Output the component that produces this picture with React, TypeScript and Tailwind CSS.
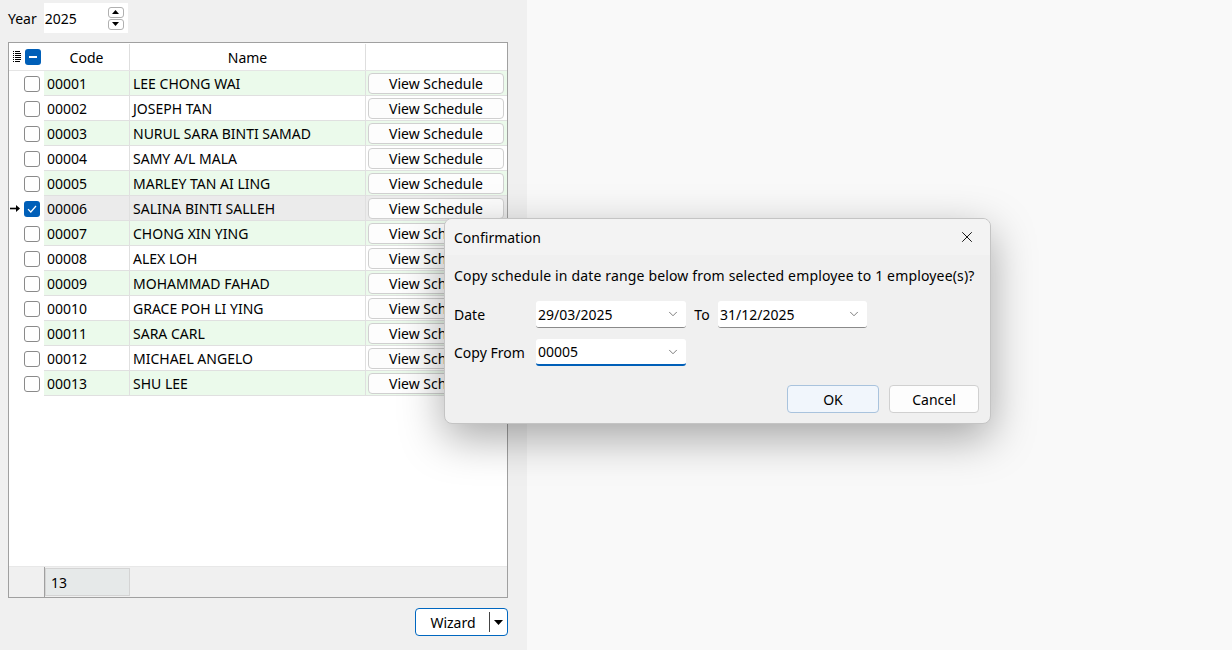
import React from 'react';
import { X, ChevronDown } from 'lucide-react';

const employees = [
  { code: '00001', name: 'LEE CHONG WAI' },
  { code: '00002', name: 'JOSEPH TAN' },
  { code: '00003', name: 'NURUL SARA BINTI SAMAD' },
  { code: '00004', name: 'SAMY A/L MALA' },
  { code: '00005', name: 'MARLEY TAN AI LING' },
  { code: '00006', name: 'SALINA BINTI SALLEH' },
  { code: '00007', name: 'CHONG XIN YING' },
  { code: '00008', name: 'ALEX LOH' },
  { code: '00009', name: 'MOHAMMAD FAHAD' },
  { code: '00010', name: 'GRACE POH LI YING' },
  { code: '00011', name: 'SARA CARL' },
  { code: '00012', name: 'MICHAEL ANGELO' },
  { code: '00013', name: 'SHU LEE' },
];

const ListIcon = () => (
  <svg width="8" height="12" viewBox="0 0 8 12" className="shrink-0">
    {[0, 2, 4, 6, 8, 10].map((y) => (
      <g key={y}>
        <rect x="0" y={y} width="1" height="1" fill="#000" />
        <rect x="2" y={y} width={y === 0 || y === 10 ? 5 : 6} height="1" fill="#000" />
      </g>
    ))}
  </svg>
);

const Check = ({ checked }: { checked?: boolean }) =>
  checked ? (
    <div className="w-4 h-4 rounded-[3px] bg-[#005fb8] flex items-center justify-center">
      <svg width="10" height="8" viewBox="0 0 10 8">
        <path d="M1 4.2 L3.8 7 L9 1" stroke="#fff" strokeWidth="1.2" fill="none" />
      </svg>
    </div>
  ) : (
    <div className="w-4 h-4 rounded-[3px] border border-[#8a8a8a] bg-white" />
  );

const Combo = ({ value, width, focused }: { value: string; width: string; focused?: boolean }) => (
  <div
    className={`${width} h-[27px] bg-white flex items-center justify-between pl-[2px] pr-[6px] rounded-[3px] ${
      focused ? 'border-b-2 border-b-[#005fb8]' : 'border-b border-b-[#8a8a8a]'
    }`}
  >
    <span className="text-[14px] text-black">{value}</span>
    <ChevronDown size={14} strokeWidth={1.3} className="text-[#555]" />
  </div>
);

export default function App() {
  return (
    <div
      className="relative w-[1232px] h-[650px] flex overflow-hidden text-black"
      style={{ fontFamily: '"Noto Sans", "Open Sans", sans-serif' }}
    >
      <div className="w-[527px] h-full bg-[#f0f0f0] flex flex-col">
        <div className="h-[38px] flex items-center pl-[8px] gap-[7px] pb-[2px]">
          <span className="text-[14px]">Year</span>
          <div className="w-[84px] h-[30px] bg-white flex items-center justify-between pl-[1px] pr-[4px]">
            <span className="text-[14px]">2025</span>
            <div className="flex flex-col gap-[1px]">
              <div className="w-[16px] h-[11px] border border-[#b0b0b0] rounded-[3px] flex items-center justify-center">
                <svg width="7" height="4" viewBox="0 0 7 4"><path d="M0 4 L3.5 0 L7 4 Z" fill="#000" /></svg>
              </div>
              <div className="w-[16px] h-[11px] border border-[#b0b0b0] rounded-[3px] flex items-center justify-center">
                <svg width="7" height="4" viewBox="0 0 7 4"><path d="M0 0 L3.5 4 L7 0 Z" fill="#000" /></svg>
              </div>
            </div>
          </div>
        </div>

        <div className="mt-[4px] ml-[8px] w-[500px] h-[556px] border border-[#a0a0a0] flex flex-col bg-white">
          {/* header */}
          <div className="h-[28px] flex text-[14px] border-b border-[#e5e5e5] pt-[1px]">
            <div className="w-[35px] flex items-center justify-end gap-[4px] pr-[3px]">
              <ListIcon />
              <div className="w-4 h-4 rounded-[3px] bg-[#005fb8] flex items-center justify-center">
                <div className="w-[8px] h-[1.5px] bg-white" />
              </div>
            </div>
            <div className="w-[86px] flex items-center justify-center border-r border-[#dedede]">Code</div>
            <div className="w-[236px] flex items-center justify-center border-r border-[#dedede]">Name</div>
            <div className="flex-1" />
          </div>

          {employees.map((e, i) => {
            const current = i === 5;
            const bg = current ? 'bg-[#ebebeb]' : i % 2 === 0 ? 'bg-[#ebfaeb]' : 'bg-white';
            return (
              <div key={e.code} className="h-[25px] flex text-[14px]">
                <div className="w-[35px] flex items-center justify-end pr-[4px] gap-[3px] bg-white">
                  {current && (
                    <svg width="11" height="9" viewBox="0 0 11 9">
                      <path d="M0 4.5 H8" stroke="#000" strokeWidth="1.6" />
                      <path d="M6 1 L10 4.5 L6 8 Z" fill="#000" />
                    </svg>
                  )}
                  <Check checked={current} />
                </div>
                <div className={`w-[86px] flex items-center pl-[3px] border-r border-b border-[#e0e0e0] ${bg}`}>{e.code}</div>
                <div className={`w-[236px] flex items-center pl-[3px] border-r border-b border-[#e0e0e0] ${bg}`}>{e.name}</div>
                <div className={`flex-1 flex items-center pl-[2px] pr-[2px] border-b border-[#e0e0e0] ${bg}`}>
                  <div className="w-[136px] h-[21px] bg-[#fdfdfd] border border-[#d0d0d0] rounded-[4px] flex items-center justify-center">
                    View Schedule
                  </div>
                </div>
              </div>
            );
          })}

          <div className="flex-1 bg-white" />

          <div className="h-[31px] bg-[#f0f0f0] flex border-t border-[#e8e8e8]">
            <div className="w-[36px] border-r border-[#a0a0a0]" />
            <div className="w-[85px] my-[1px] bg-[#e6e9e9] border border-[#d4d4d4] flex items-center pl-[5px] text-[14px]">13</div>
          </div>
        </div>

        <div className="flex justify-end pr-[19px] mt-[10px]">
          <div className="w-[93px] h-[28px] bg-white border border-[#0067c0] rounded-[4px] flex items-center">
            <span className="flex-1 text-center text-[14px] pl-[1px]">Wizard</span>
            <div className="w-[1px] h-[20px] bg-[#444]" />
            <div className="w-[17px] flex items-center justify-center">
              <svg width="9" height="5" viewBox="0 0 9 5"><path d="M0 0 L4.5 5 L9 0 Z" fill="#000" /></svg>
            </div>
          </div>
        </div>
      </div>

      <div className="flex-1 h-full bg-[#f9f9f9]" />

      {/* dialog */}
      <div className="absolute left-[444px] top-[218px] w-[547px] h-[206px] rounded-[8px] border border-[#c4c4c4] bg-[#f0f0f0] shadow-[0_14px_44px_rgba(0,0,0,0.34)] flex flex-col overflow-hidden">
        <div className="h-[36px] bg-[#f3f3f3] flex items-center justify-between pl-[9px] pr-[14px]">
          <span className="text-[14px]">Confirmation</span>
          <X size={18} strokeWidth={1.2} />
        </div>
        <div className="flex flex-col pl-[9px] pt-[9px]">
          <div className="text-[14px] tracking-[0.16px] h-[22px] flex items-center">
            Copy schedule in date range below from selected employee to 1 employee(s)?
          </div>
          <div className="flex items-center mt-[15px]">
            <span className="w-[82px] text-[14px]">Date</span>
            <Combo value="29/03/2025" width="w-[150px]" />
            <span className="w-[32px] text-[14px] text-center">To</span>
            <Combo value="31/12/2025" width="w-[149px]" />
          </div>
          <div className="flex items-center mt-[11px]">
            <span className="w-[82px] text-[14px]">Copy From</span>
            <Combo value="00005" width="w-[150px]" focused />
          </div>
          <div className="flex justify-end gap-[10px] pr-[11px] mt-[19px]">
            <div className="w-[92px] h-[28px] bg-[#f1f6fc] border border-[#a9c3dd] rounded-[4px] flex items-center justify-center text-[14px]">OK</div>
            <div className="w-[90px] h-[28px] bg-[#fdfdfd] border border-[#d0d0d0] rounded-[4px] flex items-center justify-center text-[14px]">Cancel</div>
          </div>
        </div>
      </div>
    </div>
  );
}
